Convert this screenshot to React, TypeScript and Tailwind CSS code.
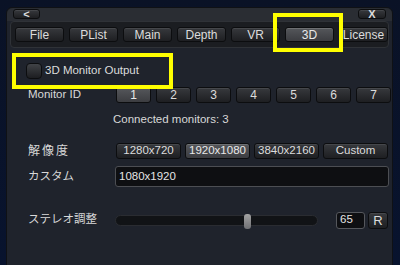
import React from 'react';

const font = { fontFamily: '"Liberation Sans", "Noto Sans CJK JP", sans-serif' };

// shared look of the dark bevelled buttons
const btn =
  'flex items-center justify-center rounded-[3px] border border-[#0c0d0f] bg-gradient-to-b from-[#37393d] to-[#1e1f22] text-[#dcdcdc] shadow-[inset_0_1px_0_rgba(255,255,255,0.08)]';
const btnOn =
  'flex items-center justify-center rounded-[3px] border border-[#0c0d0f] bg-gradient-to-b from-[#55575b] to-[#3c3d41] text-[#e8e8e8] shadow-[inset_0_1px_0_rgba(255,255,255,0.15)]';

const tabs = ['File', 'PList', 'Main', 'Depth', 'VR', '3D', 'License'];
const monitors = ['1', '2', '3', '4', '5', '6', '7'];
const resolutions = ['1280x720', '1920x1080', '3840x2160', 'Custom'];

export default function App() {
  return (
    <div
      className="relative w-[400px] h-[265px] overflow-hidden bg-gradient-to-b from-[#0a1226] to-[#08132e] pl-[6px] pt-[7px] text-[11.5px] leading-none"
      style={font}
    >
      {/* window */}
      <div className="w-[387px] h-[270px] rounded-t-[6px] border border-[#0f1115] bg-[#1f232c] flex flex-col">
        {/* title bar */}
        <div className="h-[13px] flex justify-between px-[6px] bg-[#2a2d33] rounded-t-[6px]">
          <div className={`${btn} w-[27px] h-[10px] mt-[1px] text-[11px] font-bold`}>&lt;</div>
          <div className={`${btn} w-[28px] h-[10px] mt-[1px] text-[11px] font-bold`}>X</div>
        </div>

        {/* tabs */}
        <div className="ml-[3px] w-[379px] h-[27px] rounded-[4px] border border-[#2f3237] bg-[#1b1d21] flex gap-[5px] pl-[4px] pt-[5px]">
          {tabs.map((t) => (
            <div key={t} className={`${t === '3D' ? btnOn : btn} w-[49px] h-[15px] text-[12px]`}>
              <span className="whitespace-nowrap">{t}</span>
            </div>
          ))}
        </div>

        {/* checkbox row */}
        <div className="mt-[15px] h-[16px] flex items-center pl-[19px]">
          <div className="w-[16px] h-[16px] rounded-[4px] border border-[#0c0d0f] bg-gradient-to-b from-[#414347] to-[#1d1e21]" />
          <span className="ml-[3px] text-[#dcdcdc]">3D Monitor Output</span>
        </div>

        {/* monitor id */}
        <div className="mt-[8px] h-[16px] flex items-center pl-[21px]">
          <span className="w-[88px] text-[#d8d8d8]">Monitor ID</span>
          <div className="flex gap-[5px]">
            {monitors.map((m) => (
              <div key={m} className={`${m === '1' ? btnOn : btn} w-[35px] h-[16px] text-[12px]`}>
                {m}
              </div>
            ))}
          </div>
        </div>

        <div className="mt-[9px] h-[16px] flex items-center pl-[106px] text-[#d8d8d8]">
          Connected monitors: 3
        </div>

        {/* resolution */}
        <div className="mt-[15px] h-[16px] flex items-center pl-[21px]">
          <span className="w-[88px] text-[#d8d8d8] text-[12px] tracking-[2px]">解像度</span>
          <div className="flex gap-[4px]">
            {resolutions.map((r) => (
              <div key={r} className={`${r === '1920x1080' ? btnOn : btn} w-[65px] h-[16px]`}>
                {r}
              </div>
            ))}
          </div>
        </div>

        <div className="mt-[7px] h-[21px] flex items-center pl-[21px]">
          <span className="w-[87px] text-[#d8d8d8]">カスタム</span>
          <div className="w-[274px] h-[21px] rounded-[3px] border border-[#4c4e53] bg-[#0e0f12] flex items-center pl-[3px] text-[#e4e4e4]">
            1080x1920
          </div>
        </div>

        {/* stereo */}
        <div className="mt-[25px] h-[16px] flex items-center pl-[21px]">
          <span className="w-[87px] text-[#d8d8d8]">ステレオ調整</span>
          <div className="relative w-[203px] h-[11px] rounded-full border border-[#2a2c31] bg-[#111316]">
            <div className="absolute left-[128px] top-[-2px] w-[7px] h-[15px] rounded-[3px] bg-gradient-to-b from-[#a3a3a3] to-[#6f7073]" />
          </div>
          <div className="ml-[18px] w-[29px] h-[17px] rounded-[3px] border border-[#55575c] bg-[#0e0f12] flex items-center pl-[3px] text-[#e4e4e4]">
            65
          </div>
          <div className={`${btn} ml-[3px] w-[20px] h-[17px] text-[13px]`}>R</div>
        </div>
      </div>

      {/* highlight annotations */}
      <div className="absolute left-[273px] top-[13px] w-[70px] h-[39px] border-[4px] border-[#ffff00]" />
      <div className="absolute left-[12px] top-[53px] w-[161px] h-[36px] border-[4px] border-[#ffff00]" />
    </div>
  );
}
